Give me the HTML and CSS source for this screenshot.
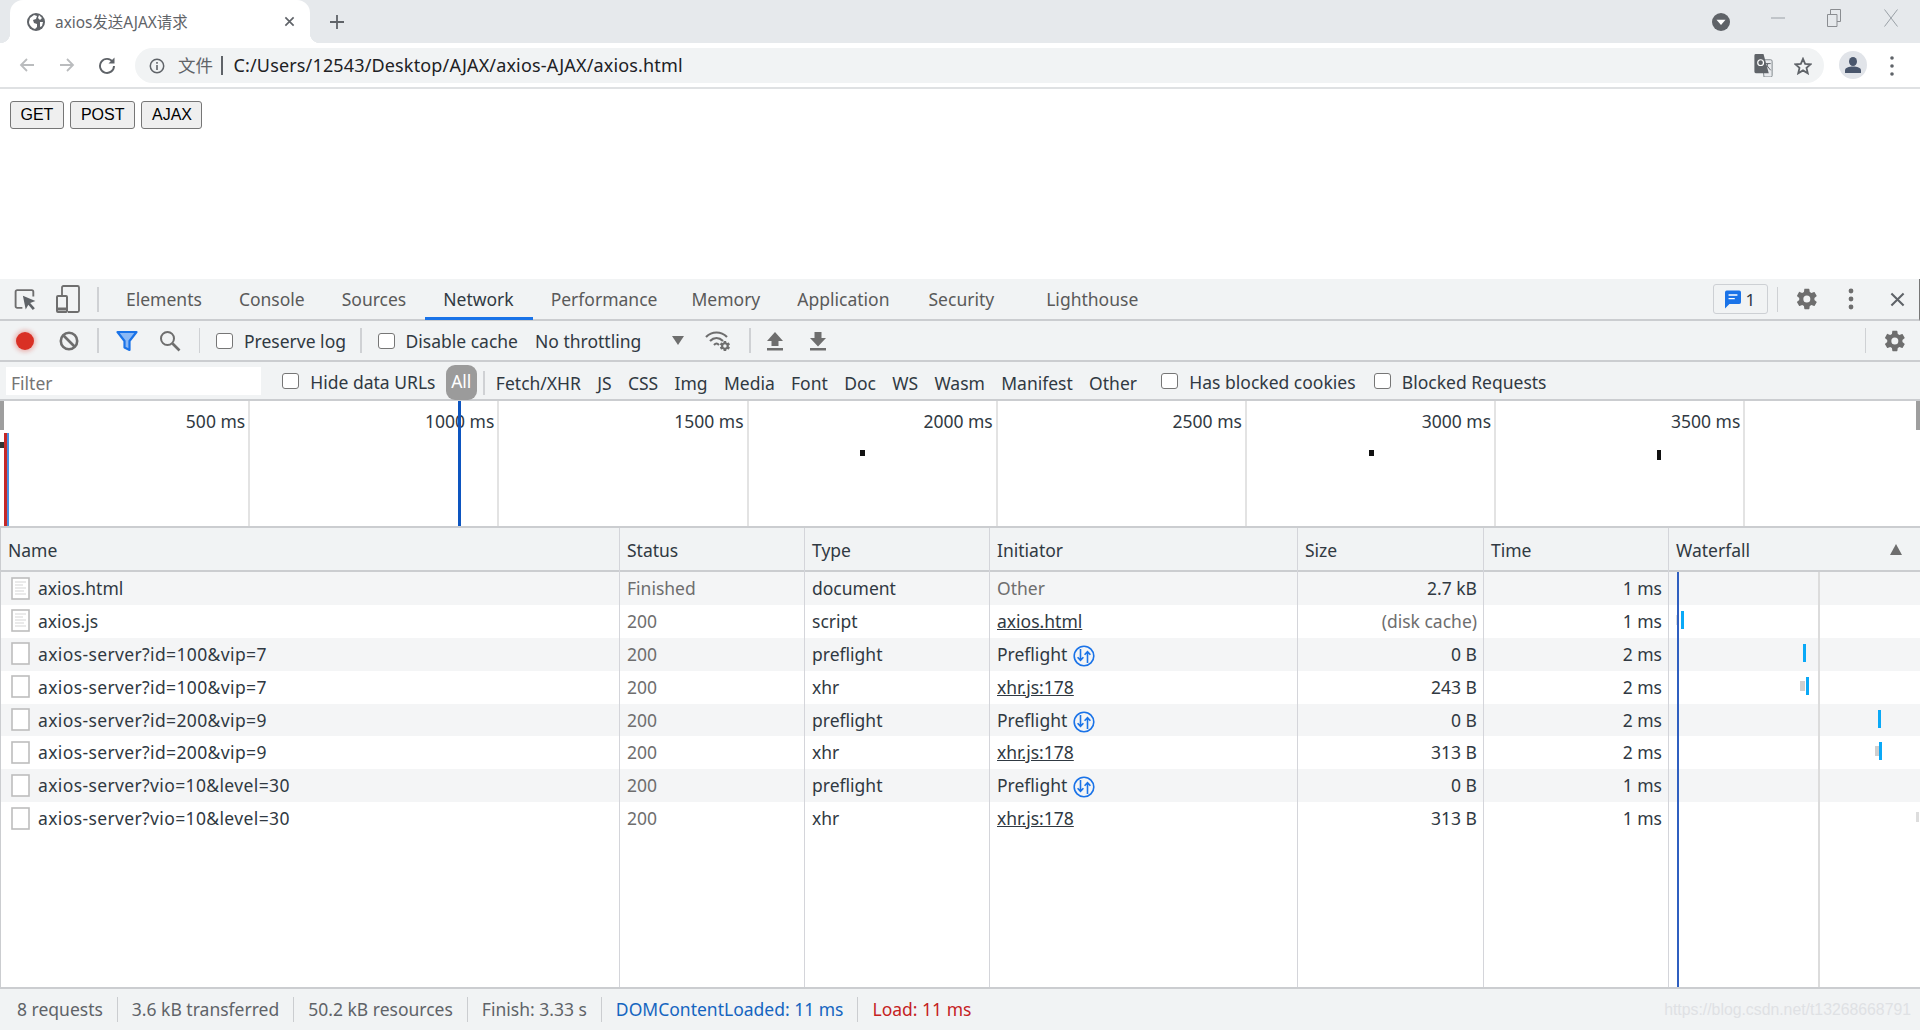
FILE: index.html
```html
<!DOCTYPE html>
<html lang="en">
<head>
<meta charset="utf-8">
<title>axios发送AJAX请求</title>
<link rel="stylesheet" href="styles.css">
</head>
<body>
<svg class="defs" aria-hidden="true">
  <symbol id="gear" viewBox="0 0 24 24"><path d="M19.4 13c.05-.33.08-.66.08-1s-.03-.67-.08-1l2.15-1.68c.2-.15.25-.42.12-.64l-2.04-3.53c-.12-.22-.39-.3-.62-.22l-2.54 1.02c-.53-.4-1.1-.74-1.73-1l-.38-2.7A.5.5 0 0 0 13.87 1.8H9.8c-.25 0-.46.18-.5.42l-.38 2.7c-.62.26-1.2.6-1.73 1L4.65 4.9c-.23-.09-.5 0-.62.22L2 8.68c-.13.22-.07.49.12.64L4.27 11c-.05.33-.08.67-.08 1s.03.67.08 1l-2.15 1.68c-.2.15-.25.42-.12.64l2.04 3.53c.12.22.39.3.62.22l2.54-1.02c.53.4 1.1.74 1.73 1l.38 2.7c.04.24.25.42.5.42h4.07c.25 0 .46-.18.5-.42l.38-2.7c.62-.26 1.2-.6 1.73-1l2.54 1.02c.23.09.5 0 .62-.22l2.04-3.53c.13-.22.07-.49-.12-.64zM11.83 15.5a3.5 3.5 0 1 1 0-7 3.5 3.5 0 0 1 0 7z"/></symbol>
  <symbol id="doc" viewBox="0 0 19 23"><rect x="1" y="1" width="17" height="21" fill="#fff" stroke="#bdbdbd" stroke-width="1.6"/></symbol>
  <symbol id="doctext" viewBox="0 0 19 23"><rect x="1" y="1" width="17" height="21" fill="#fff" stroke="#bdbdbd" stroke-width="1.6"/><path d="M4 5h11M4 8h8M4 11h11M4 14h9M4 17h11" stroke="#e4e4e4" stroke-width="1.4"/></symbol>
  <symbol id="preflight" viewBox="0 0 22 22"><circle cx="11" cy="11" r="9.8" fill="none" stroke="#1a73e8" stroke-width="1.6"/><path d="M7.5 4v11M4.6 12.2l2.9 3.2 2.9-3.2M14.5 18V7M11.6 9.800l2.900-3.200 2.900 3.200" fill="none" stroke="#1a73e8" stroke-width="1.600"/></symbol>
</svg>

<header class="tabstrip">
  <div class="tab">
    <svg class="favicon" viewBox="0 0 18 18"><circle cx="9" cy="9" r="9" fill="#5f6368"/><path d="M3 5l4-3 3 1-1 3-3 1 1 3 3 1v3l-2 2C5 15 2 12 2 9zM12 2l3 3-2 2-2-2zM13 9h3l-1 4-2 1z" fill="#fff"/></svg>
    <span class="tab-title">axios发送AJAX请求</span>
    <svg class="tab-close" viewBox="0 0 12 12"><path d="M1.500 1.500l9 9M10.500 1.500l-9 9" stroke="#5f6368" stroke-width="1.800"/></svg>
  </div>
  <svg class="newtab" viewBox="0 0 14 14"><path d="M7 0v14M0 7h14" stroke="#5f6368" stroke-width="1.800"/></svg>
  <div class="window-controls">
    <span class="tabsearch"><svg viewBox="0 0 18 24" preserveAspectRatio="none"><ellipse cx="9" cy="12" rx="9" ry="12" fill="#5f6368"/><path d="M4.500 9h9L9 16z" fill="#fff"/></svg></span>
    <svg class="win min" viewBox="0 0 14 14"><path d="M0 7h14" stroke="#9aa0a6" stroke-width="1"/></svg>
    <svg class="win max" viewBox="0 0 14 18"><path d="M.5 5.500h9.500v12H.5zM3.500 5.500V.5h10v12H10" fill="none" stroke="#8a8d91" stroke-width="1"/></svg>
    <svg class="win cls" viewBox="0 0 14 18"><path d="M.5.500l13 17M13.500.5l-13 17" stroke="#9aa0a6" stroke-width="1"/></svg>
  </div>
</header>

<nav class="addressbar">
  <svg class="nav back" viewBox="0 0 18 18"><path d="M16 9H3M9 3L3 9l6 6" fill="none" stroke="#babcbe" stroke-width="1.800"/></svg>
  <svg class="nav fwd" viewBox="0 0 18 18"><path d="M2 9h13M9 3l6 6-6 6" fill="none" stroke="#babcbe" stroke-width="1.800"/></svg>
  <svg class="nav reload" viewBox="0 0 18 18"><path d="M14.800 6A7 7 0 1 0 16 10" fill="none" stroke="#5f6368" stroke-width="1.900"/><path d="M16.500 1.500V7.500H10.500z" fill="#5f6368"/></svg>
  <div class="omnibox">
    <svg class="info" viewBox="0 0 16 16"><circle cx="8" cy="8" r="6.700" fill="none" stroke="#5f6368" stroke-width="1.500"/><path d="M8 7v5M8 4v1.800" stroke="#5f6368" stroke-width="1.600"/></svg>
    <span class="chip">文件</span>
    <span class="chip-sep"></span>
    <span class="url">C:/Users/12543/Desktop/AJAX/axios-AJAX/axios.html</span>
    <svg class="translate" viewBox="0 0 19 24"><path d="M8 6h9a1.500 1.500 0 0 1 1.500 1.500v15A1.500 1.500 0 0 1 17 24h-7z" fill="#e8eaed" stroke="#80868b"/><path d="M1.500 0h8L15 20H1.500A1.500 1.500 0 0 1 0 18.500v-17A1.500 1.500 0 0 1 1.500 0z" fill="#5f6368"/><circle cx="6.500" cy="9" r="3" fill="none" stroke="#fff" stroke-width="1.300"/><path d="M11 10h6M14 10l-2 7M13 12l4 5" fill="none" stroke="#5f6368" stroke-width="1"/></svg>
    <svg class="star" viewBox="0 0 20 20"><path d="M10 2l2.400 5.600 6.100.5-4.600 4 1.400 6L10 14.900 4.700 18.100l1.400-6-4.600-4 6.100-.5z" fill="none" stroke="#5f6368" stroke-width="2"/></svg>
  </div>
  <span class="avatar"><svg viewBox="0 0 28 28"><circle cx="14" cy="14" r="14" fill="#e1e4e9"/><ellipse cx="14" cy="10.500" rx="4" ry="4.500" fill="#49566c"/><path d="M6 22v-2.500C6 16.500 10 15.500 14 15.500s8 1 8 4V22z" fill="#49566c"/></svg></span>
  <svg class="kebab" viewBox="0 0 4 24"><circle cx="2" cy="4" r="1.800" fill="#5f6368"/><circle cx="2" cy="12" r="1.800" fill="#5f6368"/><circle cx="2" cy="20" r="1.800" fill="#5f6368"/></svg>
</nav>

<main class="page">
  <button class="pagebtn">GET</button>
  <button class="pagebtn">POST</button>
  <button class="pagebtn">AJAX</button>
</main>

<section class="devtools">
  <div class="dt-tabs">
    <svg class="ic inspect" viewBox="0 0 24 24"><path d="M9 20H4a1.500 1.500 0 0 1-1.500-1.500v-14A1.500 1.500 0 0 1 4 3h14a1.500 1.500 0 0 1 1.500 1.500V9" fill="none" stroke="#6e6e6e" stroke-width="1.800"/><path d="M9.500 8.500l12 5-5 1.800 4.500 5-2 1.800-4.300-5-2.500 4.500z" fill="#5f6368"/></svg>
    <svg class="ic device" viewBox="0 0 24 28"><path d="M6 10V2.500A1.500 1.500 0 0 1 7.500 1h14A1.500 1.500 0 0 1 23 2.500v23a1.500 1.500 0 0 1-1.500 1.500H12" fill="none" stroke="#6e6e6e" stroke-width="1.800"/><rect x="1" y="11" width="10" height="16" rx="1" fill="none" stroke="#6e6e6e" stroke-width="2"/><path d="M1 24h10" stroke="#6e6e6e" stroke-width="3"/></svg>
    <span class="vsep first"></span>
    <ul class="tablist">
      <li>Elements</li><li>Console</li><li>Sources</li><li class="active">Network</li><li>Performance</li><li class="mem">Memory</li><li>Application</li><li class="sec">Security</li><li class="last">Lighthouse</li>
    </ul>
    <span class="badge"><svg viewBox="0 0 18 20"><path d="M2 0h14a2 2 0 0 1 2 2v11a2 2 0 0 1-2 2H5l-5 5V2a2 2 0 0 1 2-2z" fill="#1a73e8"/><path d="M4 5h10M4 9h7" stroke="#fff" stroke-width="1.600"/></svg>1</span>
    <span class="vsep after-badge"></span>
    <svg class="ic gear-top"><use href="#gear"/></svg>
    <svg class="ic dots" viewBox="0 0 6 24"><circle cx="3" cy="4" r="2.400"/><circle cx="3" cy="12" r="2.400"/><circle cx="3" cy="20" r="2.400"/></svg>
    <svg class="ic closex" viewBox="0 0 16 16"><path d="M1.500 1.500l13 13M14.500 1.500l-13 13" stroke="#5f6368" stroke-width="2.200"/></svg>
  </div>

  <div class="dt-toolbar">
    <span class="record"></span>
    <svg class="ic clear" viewBox="0 0 20 20"><circle cx="10" cy="10" r="8.200" fill="none" stroke="#6e6e6e" stroke-width="2.600"/><path d="M4.500 4.500l11 11" stroke="#6e6e6e" stroke-width="2.600"/></svg>
    <span class="vsep s1"></span>
    <svg class="ic funnel" viewBox="0 0 22 22"><path d="M1.500 2h19L13.500 11v9l-5-2.500V11z" fill="#8ab8f5" stroke="#1a73e8" stroke-width="2.200" stroke-linejoin="round"/></svg>
    <svg class="ic search" viewBox="0 0 22 22"><circle cx="8.500" cy="8.500" r="6.500" fill="none" stroke="#6e6e6e" stroke-width="2"/><path d="M13.500 13.500l7 7" stroke="#6e6e6e" stroke-width="2.600"/></svg>
    <span class="vsep s2"></span>
    <label class="check c1"><span class="box"></span>Preserve log</label>
    <span class="vsep s3"></span>
    <label class="check c2"><span class="box"></span>Disable cache</label>
    <span class="throttle">No throttling</span>
    <span class="caret"></span>
    <svg class="ic wifi" viewBox="0 0 26 22"><path d="M1 7c6-6 15-6 21 0M5 11c4-4 9-4 13 0M9 15c2-2 3-2 5 0" fill="none" stroke="#6e6e6e" stroke-width="2.200"/><g transform="translate(14 10) scale(.5)"><use href="#gear" width="24" height="24" fill="#6e6e6e"/></g></svg>
    <span class="vsep s4"></span>
    <svg class="ic up" viewBox="0 0 18 20"><path d="M9 1l8 9h-4.500v5h-7v-5H1zM1 17h16v2.500H1z" fill="#6e6e6e"/></svg>
    <svg class="ic down" viewBox="0 0 18 20"><path d="M5.500 1h7v6H17l-8 8.500L1 7h4.500zM1 17h16v2.500H1z" fill="#6e6e6e"/></svg>
    <span class="vsep s5"></span>
    <svg class="ic gear-bar"><use href="#gear"/></svg>
  </div>

  <div class="dt-filter">
    <span class="filter-input">Filter</span>
    <label class="check f1"><span class="box"></span>Hide data URLs</label>
    <span class="pill">All</span>
    <span class="vsep s6"></span>
    <span class="type t-fetch">Fetch/XHR</span><span class="type">JS</span><span class="type">CSS</span><span class="type">Img</span><span class="type">Media</span><span class="type">Font</span><span class="type">Doc</span><span class="type">WS</span><span class="type">Wasm</span><span class="type">Manifest</span><span class="type">Other</span>
    <label class="check f2"><span class="box"></span>Has blocked cookies</label>
    <label class="check f3"><span class="box"></span>Blocked Requests</label>
  </div>

  <div class="overview">
    <div class="ov-cell">500 ms</div><div class="ov-cell">1000 ms</div><div class="ov-cell">1500 ms</div><div class="ov-cell">2000 ms</div><div class="ov-cell">2500 ms</div><div class="ov-cell">3000 ms</div><div class="ov-cell">3500 ms</div>
    <i class="ov-mark thumb-l"></i><i class="ov-mark thumb-r"></i><i class="ov-mark dash"></i>
    <i class="ov-mark red"></i><i class="ov-mark blue0"></i><i class="ov-mark blue"></i>
    <i class="ov-mark d1"></i><i class="ov-mark d2"></i><i class="ov-mark d3"></i>
  </div>

  <div class="table">
    <div class="row head"><div>Name</div><div>Status</div><div>Type</div><div>Initiator</div><div>Size</div><div>Time</div><div class="wf-h">Waterfall<span class="sort"></span></div></div>
    <div class="rows">
      <div class="row odd"><div class="name"><svg class="fi"><use href="#doctext"/></svg>axios.html</div><div class="dim">Finished</div><div>document</div><div class="dim">Other</div><div class="num">2.7 kB</div><div class="num">1 ms</div><div class="wf"></div></div>
      <div class="row"><div class="name"><svg class="fi"><use href="#doctext"/></svg>axios.js</div><div class="dim">200</div><div>script</div><div><a>axios.html</a></div><div class="num dim">(disk cache)</div><div class="num">1 ms</div><div class="wf"><i class="wait w-a"></i><i class="bar b-a"></i></div></div>
      <div class="row odd"><div class="name srv"><svg class="fi"><use href="#doc"/></svg>axios-server?id=100&amp;vip=7</div><div class="dim">200</div><div>preflight</div><div>Preflight<svg class="pf"><use href="#preflight"/></svg></div><div class="num">0 B</div><div class="num">2 ms</div><div class="wf"><i class="bar b-b"></i></div></div>
      <div class="row"><div class="name srv"><svg class="fi"><use href="#doc"/></svg>axios-server?id=100&amp;vip=7</div><div class="dim">200</div><div>xhr</div><div><a>xhr.js:178</a></div><div class="num">243 B</div><div class="num">2 ms</div><div class="wf"><i class="wait w-c"></i><i class="bar b-c"></i></div></div>
      <div class="row odd"><div class="name srv"><svg class="fi"><use href="#doc"/></svg>axios-server?id=200&amp;vip=9</div><div class="dim">200</div><div>preflight</div><div>Preflight<svg class="pf"><use href="#preflight"/></svg></div><div class="num">0 B</div><div class="num">2 ms</div><div class="wf"><i class="bar b-d"></i></div></div>
      <div class="row"><div class="name srv"><svg class="fi"><use href="#doc"/></svg>axios-server?id=200&amp;vip=9</div><div class="dim">200</div><div>xhr</div><div><a>xhr.js:178</a></div><div class="num">313 B</div><div class="num">2 ms</div><div class="wf"><i class="wait w-e"></i><i class="bar b-e"></i></div></div>
      <div class="row odd"><div class="name srv"><svg class="fi"><use href="#doc"/></svg>axios-server?vio=10&amp;level=30</div><div class="dim">200</div><div>preflight</div><div>Preflight<svg class="pf"><use href="#preflight"/></svg></div><div class="num">0 B</div><div class="num">1 ms</div><div class="wf"></div></div>
      <div class="row"><div class="name srv"><svg class="fi"><use href="#doc"/></svg>axios-server?vio=10&amp;level=30</div><div class="dim">200</div><div>xhr</div><div><a>xhr.js:178</a></div><div class="num">313 B</div><div class="num">1 ms</div><div class="wf"><i class="wait w-g"></i></div></div>
      <div class="row filler"><div></div><div></div><div></div><div></div><div></div><div></div><div></div></div>
      <i class="wf-line grid"></i><i class="wf-line dom"></i>
    </div>
  </div>

  <footer class="summary">
    <span>8 requests</span><span>3.6 kB transferred</span><span>50.2 kB resources</span><span>Finish: 3.33 s</span><span class="dcl">DOMContentLoaded: 11 ms</span><span class="load">Load: 11 ms</span>
    <span class="mark">https://blog.csdn.net/t13268668791</span>
  </footer>
</section>
</body>
</html>
```
FILE: styles.css
```css
* { box-sizing: border-box; }
html, body { margin: 0; padding: 0; width: 1920px; height: 1030px; overflow: hidden; background: #fff; }
body { font-family: "Noto Sans", "Noto Sans CJK SC", sans-serif; font-size: 17.5px; color: #303942; display: flex; flex-direction: column; }
.defs { display: none; }
svg { display: block; flex: none; }

/* browser chrome */
.tabstrip { height: 43px; background: #e6e9ec; display: flex; align-items: center; flex: none; }
.tab { position: relative; width: 300px; height: 43px; margin-left: 10px; background: #fff; border-radius: 13px 13px 0 0; display: flex; align-items: center; }
.tab::before, .tab::after { content: ""; position: absolute; bottom: 0; width: 10px; height: 10px; }
.tab::before { left: -10px; background: radial-gradient(circle at 0 0, #e6e9ec 10px, #fff 10.5px); }
.tab::after { right: -10px; background: radial-gradient(circle at 100% 0, #e6e9ec 10px, #fff 10.5px); }
.favicon { width: 18px; height: 18px; margin-left: 17px; }
.tab-title { margin-left: 10px; font-size: 15.4px; color: #5f6368; width: 222px; white-space: nowrap; margin-top: -1px; }
.tab-close { width: 11px; height: 11px; margin-left: 7px; }
.newtab { width: 14px; height: 14px; margin-left: 20px; }
.window-controls { margin-left: auto; position: relative; width: 210px; height: 43px; display: flex; align-items: flex-start; }
.tabsearch { width: 18px; margin-top: 13px; margin-left: 2px; }
.tabsearch svg { width: 18px; height: 18px; }
.win { width: 14px; height: 18px; margin-top: 9px; }
.min { margin-left: 41px; }
.max { margin-left: 42px; }
.cls { margin-left: 43px; }

.addressbar { height: 46px; flex: none; background: #fff; border-bottom: 2px solid #dfe1e3; display: flex; align-items: flex-start; padding-top: 5px; }
.nav { width: 18px; height: 18px; margin-top: 8px; }
.back { margin-left: 18px; }
.fwd { margin-left: 22px; }
.reload { margin-left: 22px; }
.omnibox { margin-left: 19px; width: 1689px; height: 35px; background: #f1f3f4; border-radius: 18px; display: flex; align-items: center; }
.info { width: 16px; height: 16px; margin-left: 14px; }
.chip { margin-left: 13px; font-size: 17.5px; color: #5f6368; margin-top: -2px; }
.chip-sep { width: 1.500px; height: 19px; background: #5f6368; margin-left: 8px; }
.url { margin-left: 11px; font-size: 18px; letter-spacing: .15px; color: #202124; white-space: nowrap; margin-top: -2px; }
.translate { width: 19px; height: 23px; margin-left: auto; }
.star { width: 18px; height: 18px; margin-left: 21.500px; margin-right: 12px; }
.avatar { margin-left: 15px; margin-top: 3px; }
.avatar svg { width: 28px; height: 28px; }
.kebab { width: 4px; height: 24px; margin-left: 23px; margin-top: 6px; }

.page { height: 190px; flex: none; padding: 12px 0 0 10px; display: flex; align-items: flex-start; gap: 6.500px; }
.pagebtn { height: 28px; padding: 0 9.500px; background: #efefef; border: 1px solid #767676; border-radius: 3px; font: 16px "Liberation Sans", sans-serif; color: #000; }

/* devtools */
.devtools { flex: 1; min-height: 0; display: flex; flex-direction: column; background: #f1f3f4; }
.ic { fill: #6e6e6e; }
.vsep { width: 1.500px; background: #cfd1d4; flex: none; }

.dt-tabs { height: 42px; flex: none; border-bottom: 2px solid #cbcdd0; border-right: 1px solid #777; display: flex; align-items: center; }
.inspect { width: 25px; height: 25px; margin-left: 13px; }
.device { width: 24px; height: 28px; margin-left: 18px; }
.dt-tabs .first { height: 25px; margin-left: 17px; }
.tablist { list-style: none; margin: 0 0 0 27.500px; padding: 0; display: flex; gap: 37px; height: 40px; color: #5a5a5a; }
.tablist li { line-height: 40px; position: relative; white-space: nowrap; }
.tablist .active { color: #303942; }
.tablist .active::after { content: ""; position: absolute; left: -18px; right: -19px; bottom: -1px; height: 3px; background: #1a73e8; }
.tablist .mem { margin-left: -3px; }
.tablist .sec { margin-left: 2px; }
.tablist .last { margin-left: 15px; }
.badge { margin-left: auto; width: 55px; height: 30px; border: 1px solid #cdd0d4; border-radius: 3px; background: #f1f3f4; display: flex; align-items: center; padding-left: 11px; font-size: 17px; gap: 5px; color: #303942; }
.badge svg { width: 16px; height: 19px; }
.dt-tabs .after-badge { height: 25px; margin-left: 9px; }
.gear-top { width: 24px; height: 24px; margin-left: 17px; }
.dots { width: 6px; height: 24px; margin-left: 29px; }
.closex { width: 15px; height: 15px; margin-left: 36px; margin-right: 14px; }

.dt-toolbar { height: 41px; flex: none; border-bottom: 2px solid #cbcdd0; display: flex; align-items: center; }
.dt-toolbar .vsep { height: 25px; }
.record { width: 18px; height: 18px; border-radius: 50%; background: #d93025; box-shadow: 0 0 4px 2px rgba(217,48,37,.3); margin-left: 16px; }
.clear { width: 20px; height: 20px; margin-left: 25px; }
.s1 { margin-left: 18px; }
.funnel { width: 22px; height: 22px; margin-left: 17px; }
.search { width: 22px; height: 22px; margin-left: 21px; }
.s2 { margin-left: 18px; }
.check { display: flex; align-items: center; white-space: nowrap; color: #303942; }
.box { width: 17px; height: 16px; border: 1.500px solid #767676; border-radius: 3px; background: #fff; margin-right: 11px; flex: none; }
.c1 { margin-left: 16px; }
.s3 { margin-left: 14px; }
.c2 { margin-left: 16px; }
.throttle { margin-left: 17px; width: 137px; white-space: nowrap; }
.caret { width: 0; height: 0; border-left: 6px solid transparent; border-right: 6px solid transparent; border-top: 9px solid #6e6e6e; }
.wifi { width: 26px; height: 22px; margin-left: 21px; }
.s4 { margin-left: 18px; }
.up { width: 18px; height: 20px; margin-left: 15px; }
.down { width: 18px; height: 20px; margin-left: 25px; }
.s5 { margin-left: auto; }
.gear-bar { width: 24px; height: 24px; margin-left: 17px; margin-right: 13px; }

.dt-filter { height: 39px; flex: none; border-bottom: 2px solid #cbcdd0; display: flex; align-items: center; gap: 16.300px; padding-top: 4px; }
.dt-filter .box { position: relative; top: -1px; }
.filter-input { width: 255px; height: 28px; margin-left: 6px; margin-top: -3px; background: #fff; color: #757575; line-height: 32px; padding-left: 5px; }
.f1 { margin-left: 5px; margin-right: -6px; position: relative; top: -1px; }
.pill { width: 31px; height: 35px; background: #9b9b9b; color: #fff; border-radius: 9px; text-align: center; line-height: 33px; margin-top: -1px; }
.dt-filter .s6 { height: 24px; margin-left: -10px; margin-right: -5px; }
.f2 { margin-left: 8px; position: relative; top: -1px; }
.f3 { margin-left: 2px; position: relative; top: -1px; }

.overview { height: 127px; flex: none; background: #fff; border-bottom: 2px solid #cbcdd0; padding-left: 1px; position: relative; display: flex; color: #303942; }
.ov-cell { width: 249.200px; border-right: 2px solid #e3e3e3; text-align: right; padding: 8px 3px 0 0; white-space: nowrap; flex: none; }
.ov-mark { position: absolute; display: block; }
.thumb-l { left: 0; top: 0; width: 4px; height: 29px; background: #9e9e9e; }
.thumb-r { right: 0; top: 0; width: 4px; height: 29px; background: #9e9e9e; }
.dash { left: 0; top: 41px; width: 5px; height: 6px; background: #333; }
.red { left: 4px; top: 32px; width: 3px; height: 93px; background: #c62828; }
.blue0 { left: 7px; top: 32px; width: 1.500px; height: 93px; background: #4a90e2; }
.blue { left: 458px; top: 0; width: 3px; height: 125px; background: #0d55c0; }
.d1 { left: 860px; top: 49px; width: 5px; height: 6px; background: #111; }
.d2 { left: 1369px; top: 49px; width: 5px; height: 6px; background: #111; }
.d3 { left: 1657px; top: 49px; width: 4px; height: 10px; background: #111; }

.table { flex: 1; min-height: 0; display: flex; flex-direction: column; background: #fff; border-left: 1px solid #cbcdd0; }
.row { display: grid; grid-template-columns: 619px 185px 185px 308px 186px 185px 251px; height: 32.900px; flex: none; line-height: 32px; }
.row > div { padding: 0 6px 0 7px; border-right: 1.500px solid #d4d5da; white-space: nowrap; position: relative; }
.row > div:last-child { border-right: 0; }
.odd { background: #f4f5f6; }
.head { height: 44px; flex: none; background: #f1f3f4; border-bottom: 2px solid #cbcdd0; line-height: 44px; }
.rows { flex: 1; min-height: 0; display: flex; flex-direction: column; position: relative; }
.filler { flex: 1; height: auto; }
.name { display: flex; align-items: center; padding-left: 10px !important; padding-bottom: 1px !important; }
.srv { letter-spacing: .37px; }
.fi { width: 19px; height: 23px; margin-right: 8px; }
.dim { color: #6e6e6e; }
.num { text-align: right; }
a { color: #303942; text-decoration: underline; }
.pf { display: inline-block; width: 22px; height: 22px; margin-left: 6px; vertical-align: -6px; }
.sort { position: absolute; left: 221px; top: 16px; width: 0; height: 0; border-left: 6.500px solid transparent; border-right: 6.500px solid transparent; border-bottom: 11px solid #6e6e6e; }
.wait { position: absolute; top: 10px; height: 10px; background: #cfcfcf; display: block; }
.bar { position: absolute; top: 6px; height: 18px; width: 3px; background: #0aa9f7; display: block; }
.wf { padding: 0 !important; }
.w-a { left: 7px; width: 3px; background: #ddd; }
.b-a { left: 12px; }
.b-b { left: 134px; }
.w-c { left: 131px; width: 5px; }
.b-c { left: 137px; }
.b-d { left: 209px; }
.w-e { left: 206px; width: 4px; }
.b-e { left: 210px; }
.w-g { left: 247px; width: 3px; background: #ddd; }
.wf-line { position: absolute; top: 0; bottom: 0; display: block; }
.wf-line.grid { left: 1817px; width: 1.500px; background: #dcdcdc; }
.wf-line.dom { left: 1676px; width: 2px; background: #2f5fc0; }

.summary { height: 43px; flex: none; background: #f1f3f4; border-top: 2px solid #cbcdd0; display: flex; align-items: center; padding-left: 17px; color: #5f6368; position: relative; }
.summary > span { white-space: nowrap; line-height: 25px; }
.summary > span:not(:first-child):not(.mark) { margin-left: 14px; padding-left: 14px; border-left: 1.500px solid #cbcdd0; }
.dcl { color: #1565c0; }
.load { color: #c5221f; }
.summary .mark { position: absolute; right: 9px; top: 12px; font: 15.800px "Liberation Sans", sans-serif; color: #dfe1e4; }
```
